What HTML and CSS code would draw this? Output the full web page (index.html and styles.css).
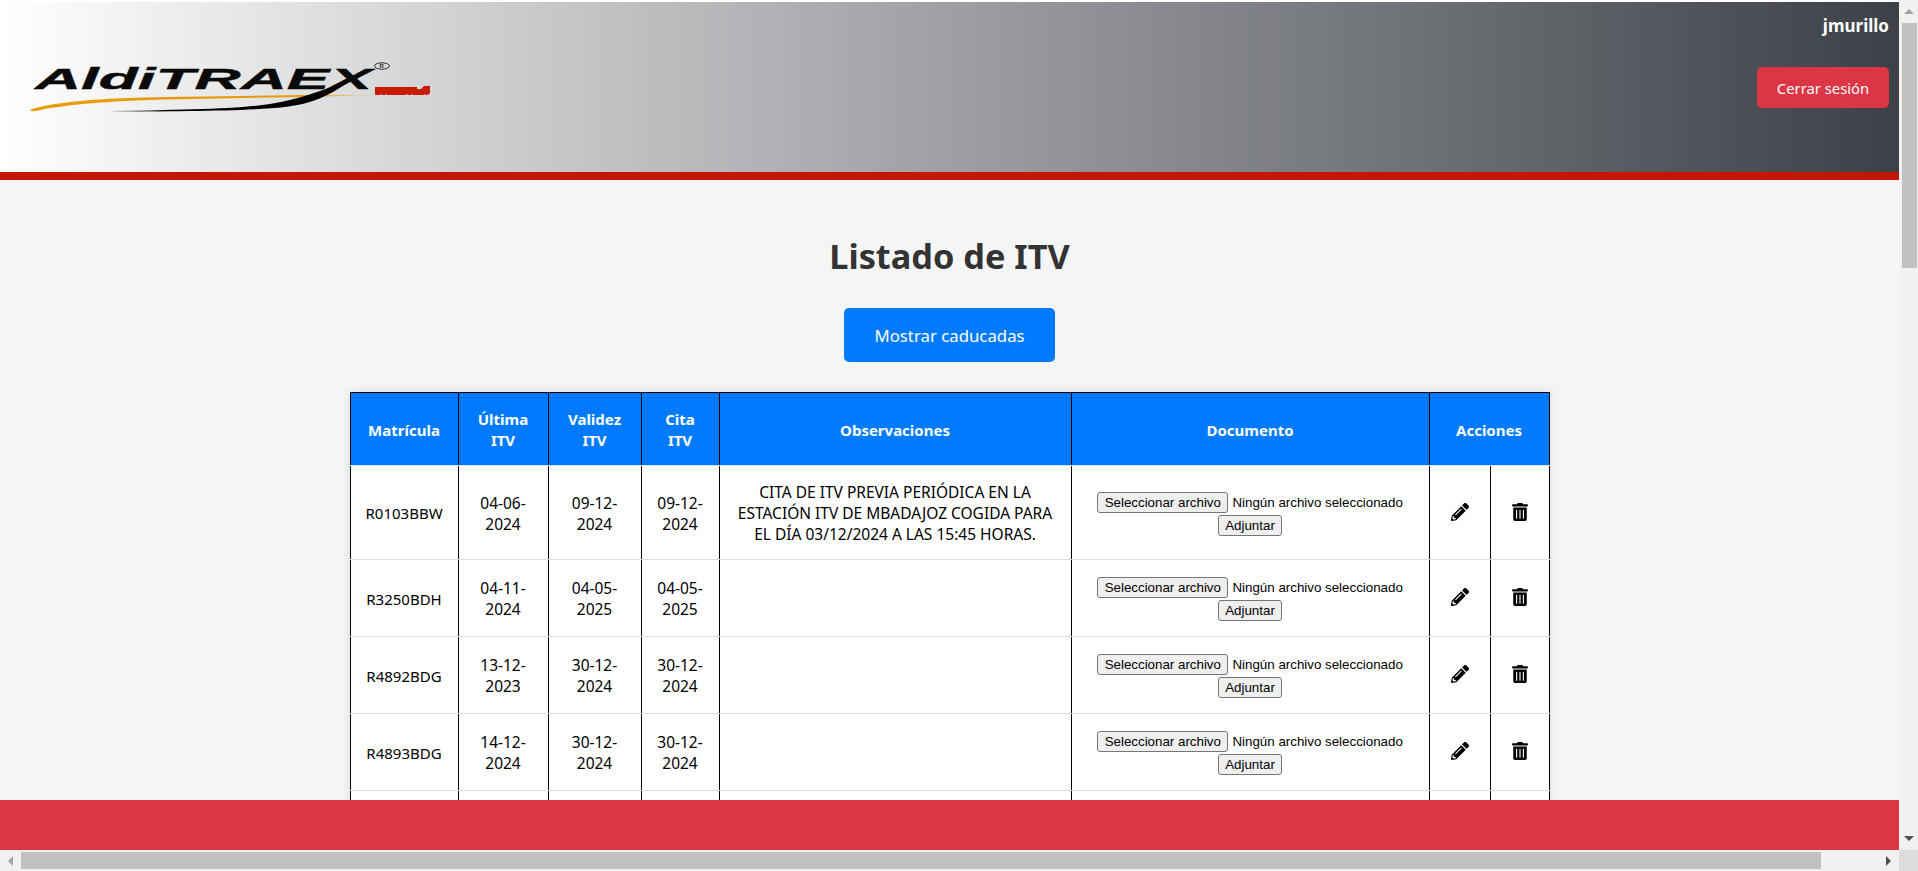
FILE: index.html
```html
<!DOCTYPE html>
<html lang="es">
<head>
  <meta charset="utf-8">
  <title>Listado de ITV</title>
  <link rel="stylesheet" href="styles.css">
</head>
<body>
  <svg class="icon-defs" width="0" height="0">
    <symbol id="pencil" viewBox="0 0 512 512"><path d="M497.9 142.1l-46.1 46.1c-4.7 4.7-12.3 4.7-17 0l-111-111c-4.7-4.7-4.7-12.3 0-17l46.1-46.1c18.7-18.7 49.1-18.7 67.9 0l60.1 60.1c18.8 18.7 18.8 49.1 0 67.9zM284.2 99.8L21.6 362.4.4 483.9c-2.9 16.4 11.4 30.6 27.8 27.8l121.5-21.3 262.6-262.6c4.7-4.7 4.7-12.3 0-17l-111-111c-4.8-4.7-12.4-4.7-17.1 0zM124.1 339.9c-5.5-5.5-5.5-14.3 0-19.8l154-154c5.5-5.5 14.3-5.5 19.8 0s5.5 14.3 0 19.8l-154 154c-5.5 5.5-14.3 5.5-19.8 0zM88 424h48v36.3l-64.5 11.3-31.1-31.1L51.7 376H88v48z"/></symbol>
    <symbol id="trash" viewBox="0 0 448 512"><path d="M32 464a48 48 0 0 0 48 48h288a48 48 0 0 0 48-48V128H32zm272-256a16 16 0 0 1 32 0v224a16 16 0 0 1-32 0zm-96 0a16 16 0 0 1 32 0v224a16 16 0 0 1-32 0zm-96 0a16 16 0 0 1 32 0v224a16 16 0 0 1-32 0zM432 32H312l-9.4-18.7A24 24 0 0 0 281.1 0H166.8a23.72 23.72 0 0 0-21.4 13.3L136 32H16A16 16 0 0 0 0 48v32a16 16 0 0 0 16 16h416a16 16 0 0 0 16-16V48a16 16 0 0 0-16-16z"/></symbol>
  </svg>

  <div class="window">
    <div class="page">
      <header class="top">
        <svg class="logo" width="450" height="170" viewBox="0 2 450 170">
          <defs>
            <linearGradient id="fade-orange" x1="0" x2="1" y1="0" y2="0">
              <stop offset="0" stop-color="#e89c0c"/>
              <stop offset="0.8" stop-color="#e89c0c"/>
              <stop offset="1" stop-color="#e89c0c" stop-opacity="0"/>
            </linearGradient>
            <linearGradient id="fade-black" x1="0" x2="1" y1="0" y2="0">
              <stop offset="0" stop-color="#000" stop-opacity="0"/>
              <stop offset="0.25" stop-color="#000"/>
            </linearGradient>
          </defs>
          <text class="logo-word" x="35" y="89" textLength="337" lengthAdjust="spacingAndGlyphs">AldiTRAEX</text>
          <ellipse cx="382" cy="66" rx="7.5" ry="3.2" fill="none" stroke="#333" stroke-width="1"/>
          <text class="logo-reg" x="379.500" y="68">R</text>
          <path d="M30 110C50 102 100 98 167 97L300 95L378 94.700L378 95.300L300 97L167 99.500C110 101 60 105 36 111Q31 112 30 110Z" fill="url(#fade-orange)"/>
          <path d="M108 111C180 110 240 109 270 104C300 99 320 91 346 82L347 83C330 95 312 104 285 107C250 111 180 111 108 112Z" fill="url(#fade-black)"/>
          <path d="M375 87H417V89H421L424 86H430V93L428 95H375Z" fill="#c71a00"/>
          <path d="M380 94.500h2M385 94.500h2M406 94.500h2M411 94.500h2M424 94.500h2" stroke="#d9786a" stroke-width="1"/>
        </svg>
        <div class="user-box">
          <span class="user-name">jmurillo</span>
          <button class="btn-logout">Cerrar sesión</button>
        </div>
      </header>

      <main class="content">
        <h1 class="title">Listado de ITV</h1>
        <button class="btn-expired">Mostrar caducadas</button>

        <table class="itv-table">
          <colgroup>
            <col class="c-plate"><col class="c-last"><col class="c-valid"><col class="c-date">
            <col class="c-notes"><col class="c-doc"><col class="c-edit"><col class="c-del">
          </colgroup>
          <thead>
            <tr>
              <th>Matrícula</th>
              <th>Última ITV</th>
              <th>Validez ITV</th>
              <th>Cita ITV</th>
              <th>Observaciones</th>
              <th>Documento</th>
              <th colspan="2">Acciones</th>
            </tr>
          </thead>
          <tbody>
            <tr>
              <td>R0103BBW</td>
              <td>04-06-2024</td>
              <td>09-12-2024</td>
              <td>09-12-2024</td>
              <td>CITA DE ITV PREVIA PERIÓDICA EN LA ESTACIÓN ITV DE MBADAJOZ COGIDA PARA EL DÍA 03/12/2024 A LAS 15:45 HORAS.</td>
              <td class="doc">
                <div class="doc-line"><button class="btn-file">Seleccionar archivo</button><span class="file-name">Ningún archivo seleccionado</span></div>
                <div class="doc-line"><button class="btn-file">Adjuntar</button></div>
              </td>
              <td><svg class="ico ico-pencil"><use href="#pencil"/></svg></td>
              <td><svg class="ico ico-trash"><use href="#trash"/></svg></td>
            </tr>
            <tr>
              <td>R3250BDH</td>
              <td>04-11-2024</td>
              <td>04-05-2025</td>
              <td>04-05-2025</td>
              <td></td>
              <td class="doc">
                <div class="doc-line"><button class="btn-file">Seleccionar archivo</button><span class="file-name">Ningún archivo seleccionado</span></div>
                <div class="doc-line"><button class="btn-file">Adjuntar</button></div>
              </td>
              <td><svg class="ico ico-pencil"><use href="#pencil"/></svg></td>
              <td><svg class="ico ico-trash"><use href="#trash"/></svg></td>
            </tr>
            <tr>
              <td>R4892BDG</td>
              <td>13-12-2023</td>
              <td>30-12-2024</td>
              <td>30-12-2024</td>
              <td></td>
              <td class="doc">
                <div class="doc-line"><button class="btn-file">Seleccionar archivo</button><span class="file-name">Ningún archivo seleccionado</span></div>
                <div class="doc-line"><button class="btn-file">Adjuntar</button></div>
              </td>
              <td><svg class="ico ico-pencil"><use href="#pencil"/></svg></td>
              <td><svg class="ico ico-trash"><use href="#trash"/></svg></td>
            </tr>
            <tr>
              <td>R4893BDG</td>
              <td>14-12-2024</td>
              <td>30-12-2024</td>
              <td>30-12-2024</td>
              <td></td>
              <td class="doc">
                <div class="doc-line"><button class="btn-file">Seleccionar archivo</button><span class="file-name">Ningún archivo seleccionado</span></div>
                <div class="doc-line"><button class="btn-file">Adjuntar</button></div>
              </td>
              <td><svg class="ico ico-pencil"><use href="#pencil"/></svg></td>
              <td><svg class="ico ico-trash"><use href="#trash"/></svg></td>
            </tr>
            <tr class="row-cut">
              <td></td><td></td><td></td><td></td><td></td><td></td><td></td><td></td>
            </tr>
          </tbody>
        </table>
      </main>

      <footer class="bottom"></footer>
    </div>

    <div class="vbar">
      <span class="arrow arrow-up"></span>
      <span class="vthumb"></span>
      <span class="arrow arrow-down"></span>
    </div>
    <div class="hbar">
      <span class="arrow arrow-left"></span>
      <span class="hthumb"></span>
      <span class="arrow arrow-right"></span>
    </div>
    <div class="corner"></div>
  </div>
</body>
</html>
```

FILE: styles.css
```css
html, body {
  height: 100%;
}
body {
  margin: 0;
  overflow: hidden;
  font-family: "Noto Sans", "Open Sans", sans-serif;
  font-size: 15px;
  line-height: 21px;
  color: #000;
}
.icon-defs {
  display: block;
  height: 0;
}

.window {
  display: grid;
  grid-template-columns: 1899px 19px;
  grid-template-rows: 850px 21px;
  height: 871px;
}
.page {
  position: relative;
  overflow: hidden;
  background-color: #f4f6f5;
}

/* header */
.top {
  display: flex;
  justify-content: space-between;
  height: 170px;
  border-top: 2px solid #fff;
  border-bottom: 8px solid #c41600;
  background: linear-gradient(to right, #fff, #3c4047);
}
.logo {
  display: block;
}
.logo-word {
  font-family: "Liberation Sans", sans-serif;
  font-weight: bold;
  font-style: italic;
  font-size: 30px;
  fill: #0a0a0a;
  stroke: #0a0a0a;
  stroke-width: 0.4;
}
.logo-reg {
  font-family: "Liberation Sans", sans-serif;
  font-size: 6px;
  font-weight: bold;
  fill: #333;
}
.user-box {
  display: flex;
  flex-direction: column;
  align-items: flex-end;
  padding: 13px 10px 0 0;
}
.user-name {
  color: #fff;
  font-weight: bold;
  font-size: 17px;
}
.btn-logout {
  height: 41px;
  width: 132px;
  margin-top: 31px;
  border: 0;
  border-radius: 5px;
  background-color: #dc3545;
  color: #fff;
  font-family: inherit;
  font-size: 14.8px;
}

/* main */
.content {
  display: flex;
  flex-direction: column;
  align-items: center;
  padding-top: 54px;
}
.title {
  margin: 0 0 31px;
  font-size: 34.3px;
  line-height: 43px;
  font-weight: bold;
  color: #333;
}
.btn-expired {
  width: 211px;
  height: 54px;
  border: 0;
  border-radius: 5px;
  background-color: #007bff;
  color: #fff;
  font-family: inherit;
  font-size: 16.8px;
}

.itv-table {
  width: 1199px;
  margin-top: 30px;
  border-collapse: collapse;
  table-layout: fixed;
  background-color: #fff;
  box-shadow: 0 0 10px rgba(0, 0, 0, 0.1);
}
.c-plate { width: 108px; }
.c-last { width: 90px; }
.c-valid { width: 93px; }
.c-date { width: 78px; }
.c-notes { width: 352px; }
.c-doc { width: 358px; }
.c-edit { width: 61px; }
.c-del { width: 59px; }

.itv-table th, .itv-table td {
  padding: 16px 15px 14px;
  text-align: center;
  vertical-align: middle;
  border: 1px solid #000;
  border-top-color: #dee2e6;
  border-bottom-color: #dee2e6;
  font-size: 15.5px;
}
.itv-table td:first-child {
  font-size: 15px;
}
.itv-table th {
  background-color: #007bff;
  color: #fff;
  font-size: 15px;
  font-weight: bold;
  border-top-color: #000;
}
.itv-table .doc {
  padding: 15px 0;
}
.doc-line {
  display: flex;
  justify-content: center;
  align-items: flex-end;
  gap: 4px;
  height: 23px;
}
.row-cut {
  height: 77px;
}

.btn-file {
  height: 21px;
  padding: 0 6.5px;
  border: 1px solid #767676;
  border-radius: 3px;
  background-color: #efefef;
  color: #000;
  font-family: "Liberation Sans", Arial, sans-serif;
  font-size: 13.333px;
  line-height: 19px;
}
.file-name {
  font-family: "Liberation Sans", Arial, sans-serif;
  font-size: 13.333px;
}
.ico {
  display: block;
  height: 18px;
  margin: -2px auto 2px;
  fill: #000;
}
.ico-pencil { width: 18px; }
.ico-trash { width: 16px; }

/* fixed red bar along the bottom */
.bottom {
  position: absolute;
  left: 0;
  right: 0;
  bottom: 0;
  height: 50px;
  background-color: #dc3545;
}

/* scrollbars */
.vbar {
  grid-row: 1;
  grid-column: 2;
  display: flex;
  flex-direction: column;
  align-items: center;
  background-color: #f1f1f1;
}
.vthumb {
  width: 15px;
  height: 245px;
  margin-right: -2px;
  background-color: #c1c1c1;
}
.hbar {
  grid-row: 2;
  grid-column: 1;
  display: flex;
  align-items: center;
  background-color: #f1f1f1;
}
.hthumb {
  width: 1800px;
  height: 17px;
  background-color: #c1c1c1;
}
.corner {
  background-color: #dcdcdc;
}
.arrow {
  flex: none;
  width: 0;
  height: 0;
  border-style: solid;
  border-color: transparent;
}
.arrow-up {
  margin: 9px 0 9px;
  border-width: 0 5px 5px;
  border-bottom-color: #a3a3a3;
}
.arrow-down {
  margin: auto 0 9px;
  border-width: 5px 5px 0;
  border-top-color: #505050;
}
.arrow-left {
  margin: 0 8px 0 8px;
  border-width: 5px 5px 5px 0;
  border-right-color: #a3a3a3;
}
.arrow-right {
  margin: 0 8px 0 auto;
  border-width: 5px 0 5px 5px;
  border-left-color: #505050;
}
```
